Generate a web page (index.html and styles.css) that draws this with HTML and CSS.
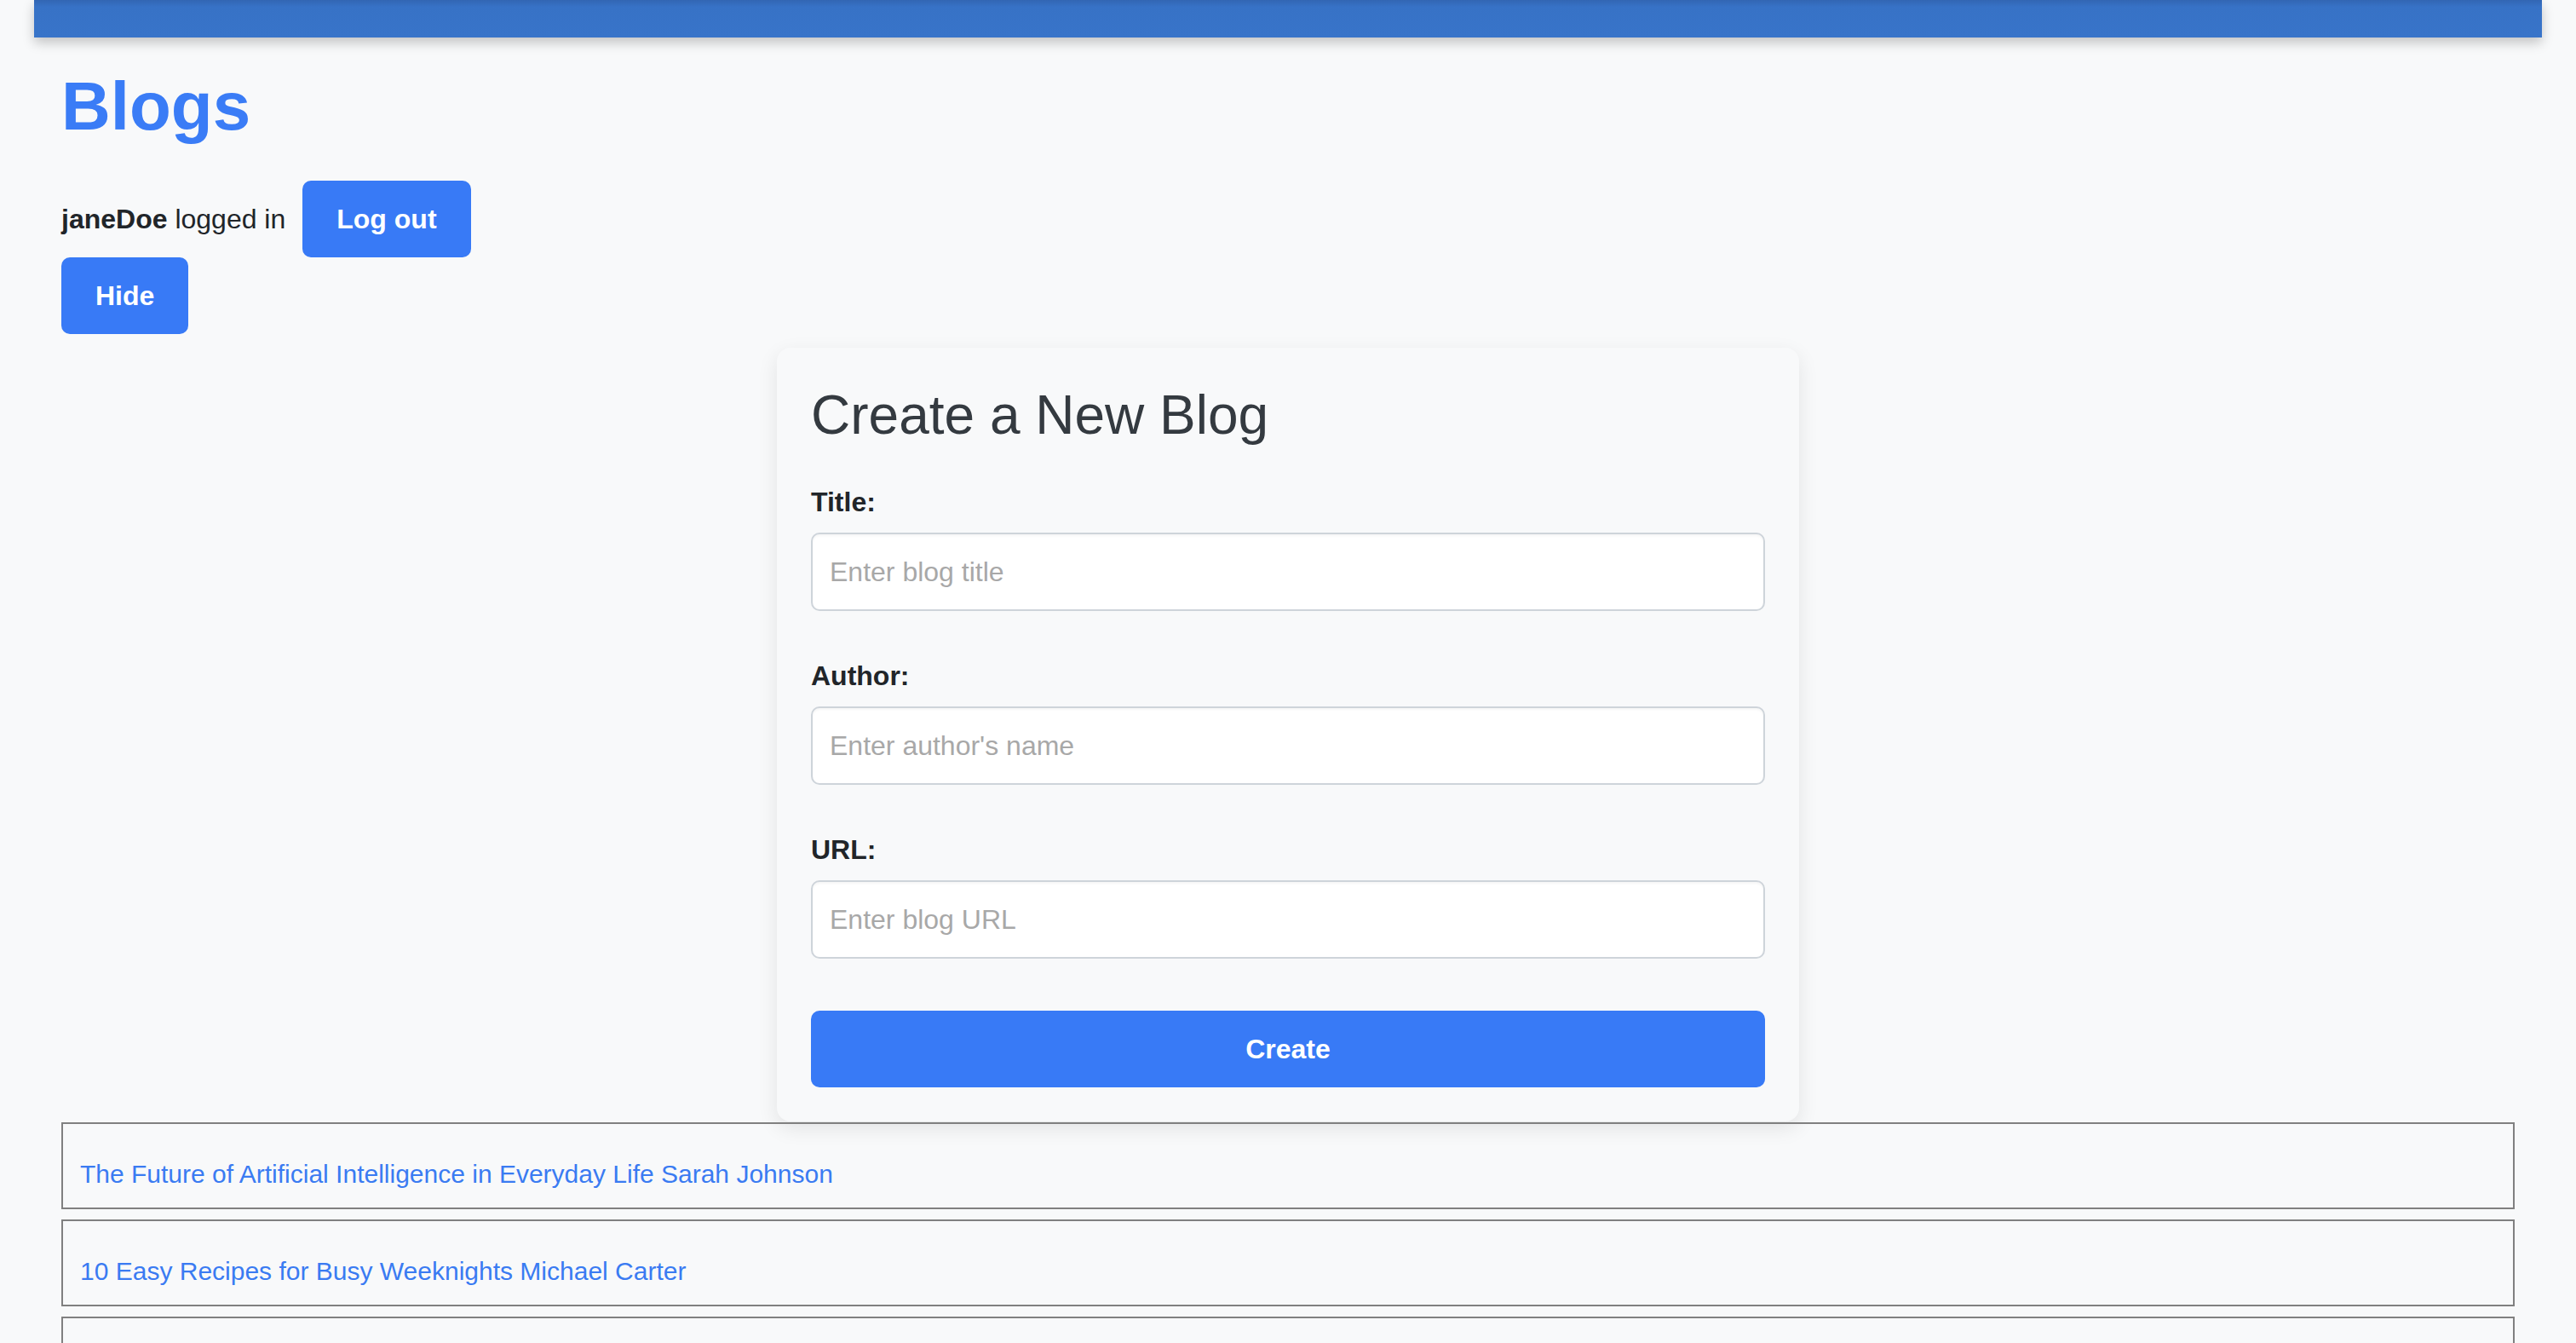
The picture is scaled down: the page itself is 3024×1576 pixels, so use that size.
FILE: index.html
```html
<!DOCTYPE html>
<html lang="en">
<head>
<meta charset="utf-8">
<title>Blogs</title>
<link rel="stylesheet" href="styles.css">
</head>
<body>
  <div class="topbar"></div>
  <main class="container">
    <h1 class="page-title">Blogs</h1>
    <div class="user-row">
      <span class="user-text"><strong>janeDoe</strong> logged in</span>
      <button class="btn btn-logout" type="button">Log out</button>
    </div>
    <div class="toggle-row">
      <button class="btn" type="button">Hide</button>
    </div>
    <section class="card">
      <h2 class="card-title">Create a New Blog</h2>
      <form class="blog-form">
        <div class="form-group">
          <label class="form-label" for="title">Title:</label>
          <input class="form-input" id="title" type="text" placeholder="Enter blog title">
        </div>
        <div class="form-group">
          <label class="form-label" for="author">Author:</label>
          <input class="form-input" id="author" type="text" placeholder="Enter author's name">
        </div>
        <div class="form-group">
          <label class="form-label" for="url">URL:</label>
          <input class="form-input" id="url" type="text" placeholder="Enter blog URL">
        </div>
        <button class="btn btn-block" type="submit">Create</button>
      </form>
    </section>
    <div class="blog-list">
      <div class="blog-item"><a class="blog-link" href="#">The Future of Artificial Intelligence in Everyday Life Sarah Johnson</a></div>
      <div class="blog-item"><a class="blog-link" href="#">10 Easy Recipes for Busy Weeknights Michael Carter</a></div>
      <div class="blog-item blog-item-empty"></div>
    </div>
  </main>
</body>
</html>
```
FILE: styles.css
```css
* { box-sizing: border-box; }

html, body {
  margin: 0;
  padding: 0;
  background: #f8f9fa;
}

body {
  font-family: "Liberation Sans", Arial, Helvetica, sans-serif;
  color: #212529;
  overflow: hidden;
}

.topbar {
  height: 44px;
  margin: 0 40px;
  background: linear-gradient(180deg, #3266b3 0px, #3772c6 8px, #3874c9 100%);
  box-shadow: 0 6px 14px rgba(0, 0, 0, 0.22);
}

.container {
  padding: 0 72px;
}

.page-title {
  margin: 35px 0 41px;
  font-size: 80px;
  line-height: 92px;
  font-weight: 700;
  color: #3a7cf6;
}

.user-row {
  display: flex;
  align-items: baseline;
}

.user-text {
  font-size: 32px;
  line-height: 37px;
  color: #212529;
}

.user-text strong { font-weight: 700; }

.btn {
  display: inline-block;
  height: 90px;
  padding: 26px 40px;
  font-family: inherit;
  font-size: 32px;
  line-height: 38px;
  font-weight: 700;
  color: #ffffff;
  background: #387af6;
  border: none;
  border-radius: 10px;
  cursor: pointer;
}

.btn-logout { margin-left: 20px; }

.toggle-row { display: flex; }

.card {
  width: 1200px;
  margin: 16px auto 0;
  padding: 40px;
  background: #f8f9fa;
  border-radius: 16px;
  box-shadow: 0 8px 24px rgba(0, 0, 0, 0.09);
}

.card-title {
  margin: 2px 0 47px;
  font-size: 64px;
  line-height: 74px;
  font-weight: 400;
  color: #343a40;
}

.blog-form {
  display: flex;
  flex-direction: column;
}

.form-group {
  margin-bottom: 58px;
}

.form-label {
  display: block;
  margin-bottom: 17px;
  font-size: 32px;
  line-height: 37px;
  font-weight: 700;
  color: #212529;
}

.form-input {
  display: block;
  width: 100%;
  height: 92px;
  padding: 0 20px;
  font-family: inherit;
  font-size: 32px;
  color: #212529;
  background: #ffffff;
  border: 2px solid #ced4da;
  border-radius: 10px;
  box-shadow: inset 0 2px 3px rgba(0, 0, 0, 0.04);
  outline: none;
}

.form-input::placeholder { color: #a8a8a8; }

.btn-block {
  display: block;
  width: 100%;
  margin-top: 3px;
  text-align: center;
}

.blog-list {
  margin-top: 1px;
}

.blog-item {
  padding: 42px 20px 22px;
  margin-bottom: 12px;
  border: 2px solid #808080;
}

.blog-item-empty {
  min-height: 102px;
}

.blog-link {
  font-size: 30px;
  line-height: 34px;
  color: #3a7bf2;
  text-decoration: none;
}
```
